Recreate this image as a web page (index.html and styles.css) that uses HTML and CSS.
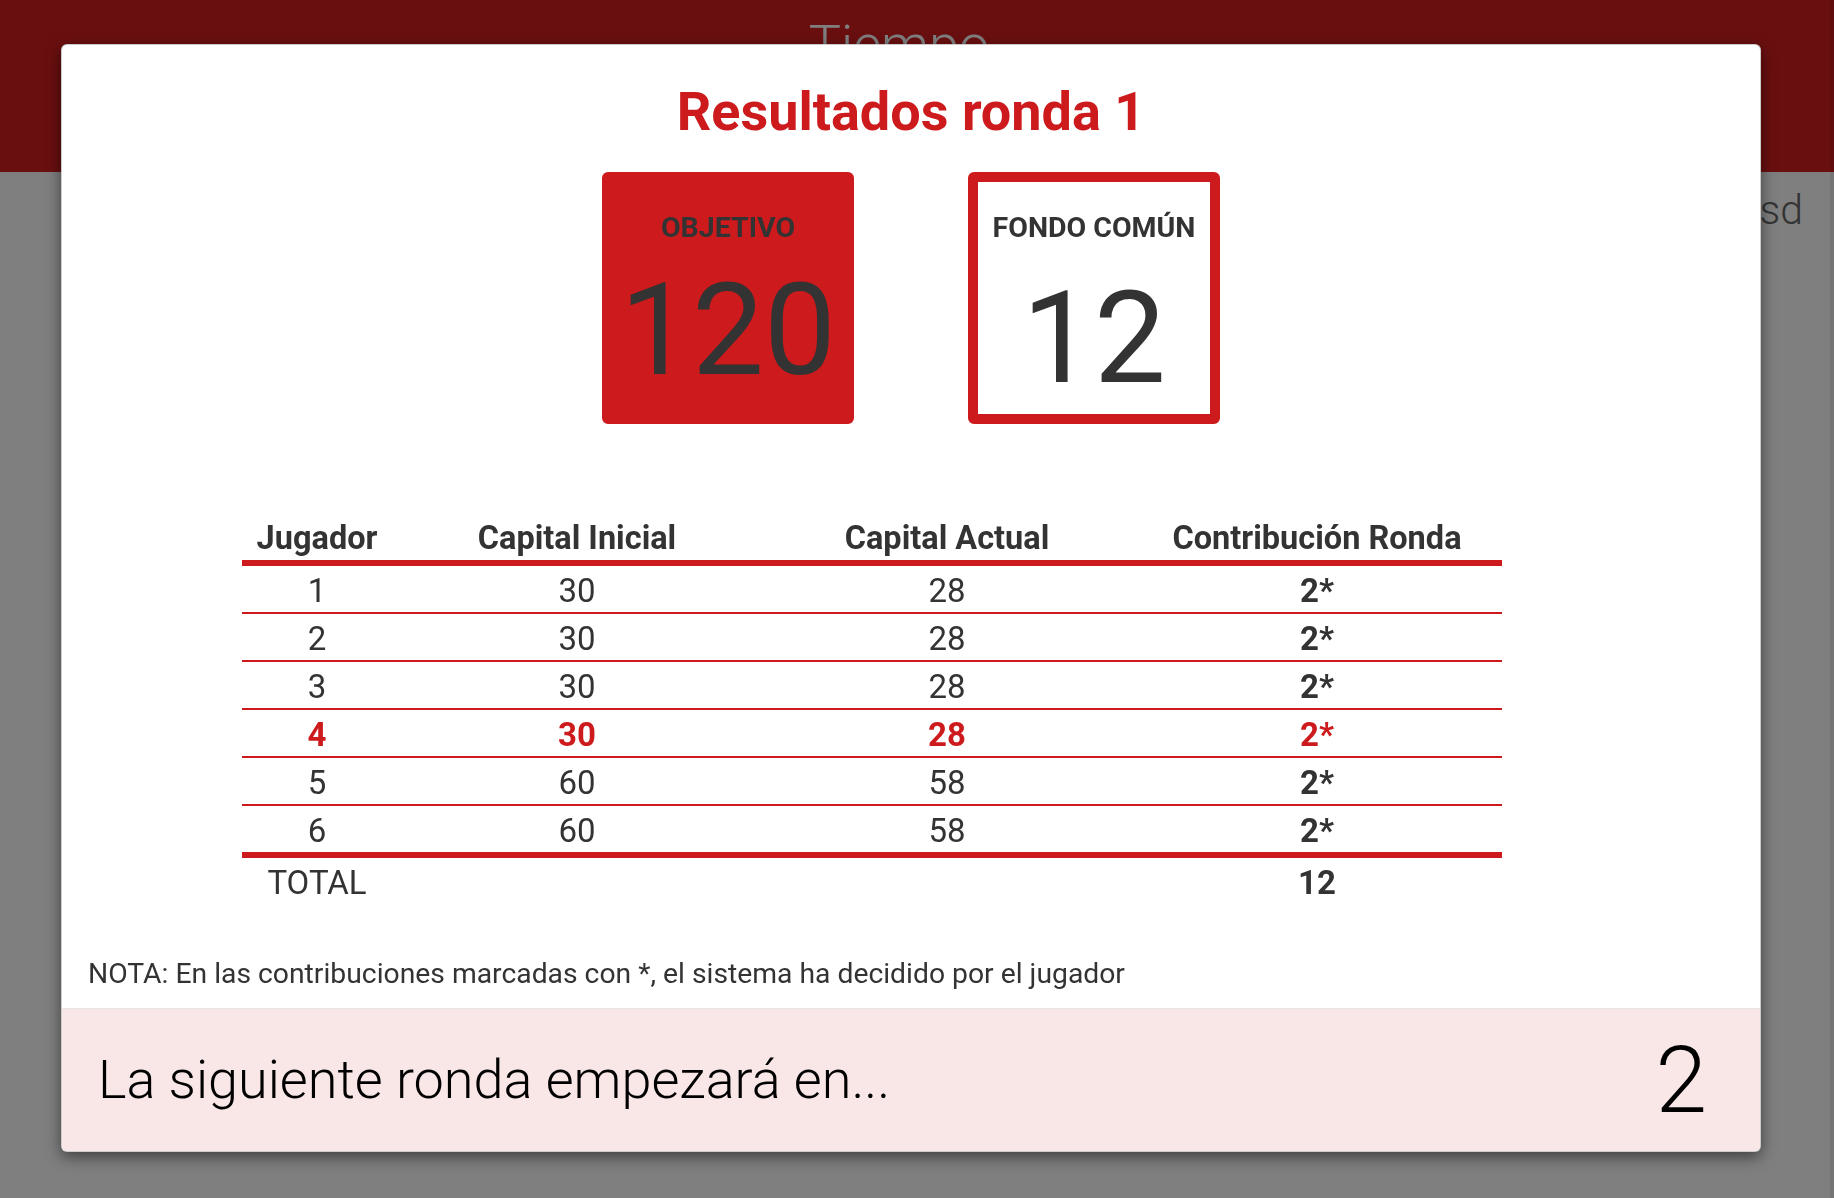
FILE: index.html
```html
<!DOCTYPE html>
<html lang="es">
<head>
<meta charset="utf-8">
<title>Resultados ronda 1</title>
<link rel="stylesheet" href="styles.css">
</head>
<body>
<div class="page">
  <header class="topbar">
    <div class="topbar-title">Tiempo</div>
  </header>
  <div class="page-row">
    <span class="page-text">Asd</span>
  </div>
</div>

<div class="backdrop"></div>

<div class="modal">
  <div class="modal-body">
    <h1 class="modal-title">Resultados ronda 1</h1>

    <div class="stats">
      <div class="stat stat-filled">
        <div class="stat-label">OBJETIVO</div>
        <div class="stat-value">120</div>
      </div>
      <div class="stat stat-outline">
        <div class="stat-label">FONDO COMÚN</div>
        <div class="stat-value stat-value-low">12</div>
      </div>
    </div>

    <table class="results">
      <colgroup>
        <col class="c-player">
        <col class="c-wide">
        <col class="c-wide">
        <col class="c-wide">
      </colgroup>
      <thead>
        <tr><th>Jugador</th><th>Capital Inicial</th><th>Capital Actual</th><th>Contribución Ronda</th></tr>
      </thead>
      <tbody>
        <tr><td>1</td><td>30</td><td>28</td><td class="strong">2*</td></tr>
        <tr><td>2</td><td>30</td><td>28</td><td class="strong">2*</td></tr>
        <tr><td>3</td><td>30</td><td>28</td><td class="strong">2*</td></tr>
        <tr class="me"><td>4</td><td>30</td><td>28</td><td class="strong">2*</td></tr>
        <tr><td>5</td><td>60</td><td>58</td><td class="strong">2*</td></tr>
        <tr class="last"><td>6</td><td>60</td><td>58</td><td class="strong">2*</td></tr>
      </tbody>
      <tfoot>
        <tr><td>TOTAL</td><td></td><td></td><td class="strong">12</td></tr>
      </tfoot>
    </table>

    <p class="note">NOTA: En las contribuciones marcadas con *, el sistema ha decidido por el jugador</p>
  </div>
  <div class="modal-footer">
    <span class="next-text">La siguiente ronda empezará en...</span>
    <span class="countdown">2</span>
  </div>
</div>
</body>
</html>
```

FILE: styles.css
```css
html, body {
  margin: 0;
  padding: 0;
}

body {
  font-family: Roboto, "Liberation Sans", sans-serif;
  color: #333;
  background: #fff;
  min-height: 1198px;
  overflow: hidden;
}

.topbar {
  height: 172px;
  background: #d41e20;
  display: flex;
  justify-content: center;
}

.topbar-title {
  font-size: 54px;
  font-weight: 300;
  color: #fff;
  line-height: 1;
  padding-top: 18px;
  padding-right: 36px;
}

.page-row {
  display: flex;
  justify-content: flex-end;
  padding: 14px 31px 0 0;
}

.page-text {
  font-size: 41px;
  font-weight: 300;
  color: #666;
  line-height: 1.2;
}

.backdrop {
  position: fixed;
  inset: 0;
  background: rgba(0, 0, 0, 0.5);
  border-right: 4px solid rgba(0, 0, 0, 0.08);
}

.modal {
  position: absolute;
  left: 61px;
  top: 44px;
  width: 1698px;
  background: #fff;
  border: 1px solid rgba(0, 0, 0, 0.2);
  border-radius: 6px;
  box-shadow: 0 5px 15px rgba(0, 0, 0, 0.5);
  overflow: hidden;
}

.modal-body {
  padding: 38px 26px 15px;
}

.modal-title {
  margin: 0;
  text-align: center;
  font-size: 54px;
  font-weight: 700;
  line-height: 58px;
  color: #cd1a1c;
}

.stats {
  display: flex;
  justify-content: center;
  gap: 114px;
  margin-top: 31px;
}

.stat {
  box-sizing: border-box;
  width: 252px;
  height: 252px;
  border: 10px solid #cd1a1c;
  border-radius: 6px;
  padding-top: 30px;
  text-align: center;
  color: #333;
}

.stat-filled {
  background: #cd1a1c;
}

.stat-outline {
  background: #fff;
}

.stat-label {
  font-size: 28.5px;
  font-weight: 700;
  line-height: 32px;
}

.stat-value {
  font-size: 128px;
  font-weight: 400;
  line-height: 128px;
  margin-top: 22px;
}

.stat-value-low {
  margin-top: 30px;
}

.results {
  width: 1260px;
  margin: 90px 0 0 154px;
  border-collapse: collapse;
  table-layout: fixed;
  font-size: 33px;
}

.c-player { width: 150px; }
.c-wide { width: 370px; }

.results th,
.results td {
  padding: 3px 0 0;
  line-height: 43px;
  text-align: center;
  color: #333;
}

.results th {
  font-size: 32.5px;
  font-weight: 700;
  border-bottom: 6px solid #cd1a1c;
}

.results tbody td {
  font-weight: 400;
  border-bottom: 2px solid #cd1a1c;
}

.results tbody tr.last td {
  border-bottom: 6px solid #cd1a1c;
}

.results td.strong {
  font-weight: 700;
}

.results tr.me td {
  color: #cd1a1c;
  font-weight: 700;
}

.note {
  margin: 50px 0 0;
  font-size: 28.3px;
  line-height: 39px;
  font-weight: 400;
  color: #333;
}

.modal-footer {
  height: 143px;
  box-sizing: border-box;
  border-top: 1px solid #e5e5e5;
  background: #f9e6e6;
  display: flex;
  align-items: center;
  justify-content: space-between;
  padding: 0 53px 0 36px;
  color: #000;
  font-weight: 300;
}

.next-text {
  font-size: 54px;
  line-height: 1;
}

.countdown {
  font-size: 93px;
  line-height: 1;
}
```
